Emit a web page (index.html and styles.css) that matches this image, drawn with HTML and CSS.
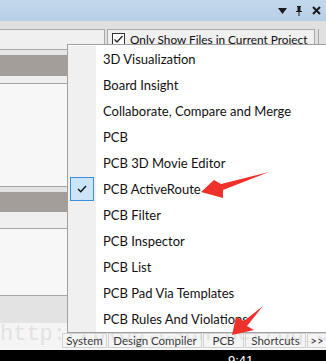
FILE: index.html
```html
<!DOCTYPE html>
<html>
<head>
<meta charset="utf-8">
<link rel="stylesheet" href="styles.css">
</head>
<body>
<div class="screen">
  <div class="titlebar">
    <span class="tb-icon">
      <svg width="9" height="6" viewBox="0 0 9 6"><path d="M0 0H9L4.5 6Z" fill="#1a1a1a"/></svg>
    </span>
    <span class="tb-icon">
      <svg width="8" height="10" viewBox="0 0 8 10"><path d="M2 0H6V1H5.5V5H7V6H4.5V10H3.5V6H1V5H2.5V1H2Z" fill="#1a1a1a"/></svg>
    </span>
    <span class="tb-icon">
      <svg width="9" height="9" viewBox="0 0 9 9"><path d="M1 1L8 8M8 1L1 8" stroke="#1a1a1a" stroke-width="2"/></svg>
    </span>
  </div>
  <div class="toolrow">
    <div class="searchbox"></div>
    <div class="optbox">
      <span class="chk">
        <svg width="13" height="13" viewBox="0 0 13 13"><rect x="0.5" y="0.5" width="12" height="12" fill="#fff" stroke="#333"/><path d="M2.5 6.5L5 9L10.5 3" fill="none" stroke="#222" stroke-width="1.3"/></svg>
      </span>
      <span class="opt-label">Only Show Files in Current Project</span>
    </div>
    <div class="optrest"></div>
  </div>
  <div class="gap-light"></div>
  <div class="band"></div>
  <div class="sub"></div>
  <div class="area a1"></div>
  <div class="gap-mid"></div>
  <div class="band band2"></div>
  <div class="sub sub2"></div>
  <div class="area a2"></div>
  <div class="foot"></div>
  <div class="statusbar">
    <span class="wm">http://blog.csdn.net/qq_34186001</span>
    <div class="tabs">
      <span class="tab t1">System</span>
      <span class="tab t2">Design Compiler</span>
      <span class="tab t3">PCB</span>
      <span class="tab t4">Shortcuts</span>
      <span class="tab t5">&gt;&gt;</span>
    </div>
  </div>
  <div class="blackbar"><span class="time">9:41</span></div>

  <div class="menu">
    <div class="item"><span class="gut"></span><span class="lbl">3D Visualization</span></div>
    <div class="item"><span class="gut"></span><span class="lbl">Board Insight</span></div>
    <div class="item"><span class="gut"></span><span class="lbl">Collaborate, Compare and Merge</span></div>
    <div class="item"><span class="gut"></span><span class="lbl">PCB</span></div>
    <div class="item"><span class="gut"></span><span class="lbl">PCB 3D Movie Editor</span></div>
    <div class="item"><span class="gut"><span class="checked"><svg width="10" height="8" viewBox="0 0 10 8"><path d="M1 4L3.8 6.8L9 1" fill="none" stroke="#111" stroke-width="1.4"/></svg></span></span><span class="lbl">PCB ActiveRoute</span></div>
    <div class="item"><span class="gut"></span><span class="lbl">PCB Filter</span></div>
    <div class="item"><span class="gut"></span><span class="lbl">PCB Inspector</span></div>
    <div class="item"><span class="gut"></span><span class="lbl">PCB List</span></div>
    <div class="item"><span class="gut"></span><span class="lbl">PCB Pad Via Templates</span></div>
    <div class="item"><span class="gut"></span><span class="lbl">PCB Rules And Violations</span></div>
  </div>

  <svg class="arrows" width="326" height="361" viewBox="0 0 326 361">
    <path d="M269 172 L221 184 L214 180 L201 192 L223 198 L223 190 Z" fill="#f0312b"/>
    <path d="M263 306 L244 321 L236 317 L232 335 L254 330 L247 326 Z" fill="#f0312b"/>
  </svg>
</div>
</body>
</html>
```
FILE: styles.css
```css
* { box-sizing: border-box; }
html, body { margin: 0; padding: 0; }
body { width: 326px; height: 361px; overflow: hidden; background: #f0f0f0; font-family: "Lato", "Noto Sans", sans-serif; }
.screen { position: relative; width: 326px; height: 361px; display: flex; flex-direction: column; }

.titlebar { height: 21px; flex: none; background: linear-gradient(#c4d8ec, #b6cfe6); display: flex; justify-content: flex-end; align-items: center; gap: 7px; padding-right: 5px; }
.tb-icon { width: 10px; height: 12px; display: flex; align-items: center; justify-content: center; }

.toolrow { height: 29px; flex: none; background: #e0e0e0; display: flex; padding-top: 8px; gap: 2px; }
.searchbox { width: 105px; border: 1px solid #a9a9a9; border-left: none; background: #f0f0f0; }
.optbox { width: 208px; border: 1px solid #a9a9a9; border-bottom: none; background: #f0f0f0; display: flex; align-items: flex-start; padding: 3px 0 0 4px; gap: 5px; }
.chk { display: flex; height: 13px; }
.opt-label { font-size: 11.8px; line-height: 14px; color: #111; white-space: nowrap; }
.optrest { flex: 1; border-left: 1px solid #a9a9a9; margin-left: 1px; background: #e0e0e0; }

.gap-light { height: 5px; flex: none; background: #e6e6e6; }
.band { height: 21px; flex: none; background: #a39e99; }
.band2 { height: 20px; }
.sub { height: 8px; flex: none; background: #efefef; border-bottom: 1px solid #a6a6a6; }
.sub2 { height: 17px; }
.area { flex: none; background: #f7f7f7; border-bottom: 1px solid #a6a6a6; }
.a1 { height: 103px; }
.a2 { height: 67px; }
.gap-mid { height: 5px; flex: none; background: #e3e3e3; }
.foot { height: 27px; flex: none; background: #e3e3e3; }

.statusbar { position: relative; height: 27px; flex: none; background: #f5f5f5; overflow: hidden; }
.wm { position: absolute; left: 0; top: -1px; font-family: "Liberation Mono", monospace; font-size: 22px; color: #e2e2e2; white-space: nowrap; }
.tabs { position: absolute; left: 62px; top: 10px; display: flex; gap: 1px; }
.tab { font-family: "Lato", sans-serif; font-size: 11.5px; line-height: 13px; height: 15px; color: #3a3a3a; border: 1px solid #d2d2d2; white-space: nowrap; text-align: center; }
.t1 { width: 45px; }
.t2 { width: 94px; }
.t3 { width: 41px; }
.t4 { width: 61px; }
.t5 { width: 20px; }

.blackbar { height: 11px; flex: none; background: #000; position: relative; overflow: hidden; }
.time { position: absolute; left: 228px; top: 4px; color: #fff; font-size: 13px; font-family: "Liberation Sans", sans-serif; line-height: 13px; }

.menu { position: absolute; left: 67px; top: 44px; width: 270px; background: #fff; border: 1px solid #a0a0a0; display: flex; flex-direction: column; padding: 1px 0 0 0; }
.item { height: 26px; display: flex; align-items: center; }
.gut { width: 28px; height: 100%; background: #f0f0f0; display: flex; align-items: center; justify-content: center; margin-right: 7px; }
.checked { width: 24px; height: 24px; background: #cce4f7; border: 1px solid #3b8fd9; display: flex; align-items: center; justify-content: center; }
.lbl { font-size: 13px; color: #111; white-space: nowrap; }

.arrows { position: absolute; left: 0; top: 0; pointer-events: none; }
```
